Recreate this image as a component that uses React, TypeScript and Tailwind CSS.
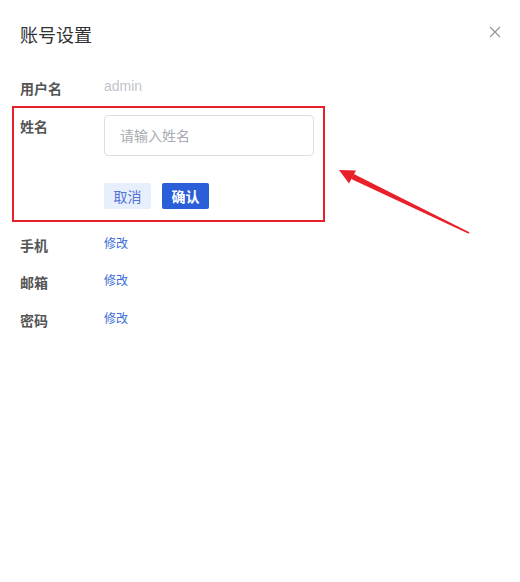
import React from "react";

const font = { fontFamily: '"Noto Sans CJK SC", "Noto Sans", sans-serif' };

export default function App() {
  return (
    <div className="relative w-[520px] h-[582px] bg-white overflow-hidden" style={font}>
      <div className="flex items-center justify-between pl-5 pr-[20px] pt-[22px] h-[46px]">
        <div className="text-[18px] leading-6 text-[#303133]">账号设置</div>
        <svg width="12" height="12" viewBox="0 0 12 12" className="mr-[-1px] mt-[-4px]">
          <path d="M1 1 L11 11 M11 1 L1 11" stroke="#909399" strokeWidth="1.1" />
        </svg>
      </div>

      <div className="flex flex-col px-5 pt-[31px]">
        <div className="flex items-center h-[22px]">
          <div className="w-[84px] text-[14px] font-semibold text-[#555]">用户名</div>
          <div className="text-[14px] text-[#c0c4cc] mt-[-4px]" style={{ fontFamily: '"Liberation Sans", sans-serif' }}>admin</div>
        </div>

        <div className="flex mt-4">
          <div className="w-[84px] text-[14px] leading-[22px] font-semibold text-[#555]">姓名</div>
          <div className="flex flex-col">
            <div className="w-[210px] h-[41px] border border-[#dcdfe6] rounded flex items-center pl-[15px] text-[14px] text-[#a8abb2]">
              请输入姓名
            </div>
            <div className="flex gap-[11px] mt-[27px]">
              <div className="w-[47px] h-[26px] rounded-[2px] bg-[#e8effc] text-[#4f74d6] text-[14px] flex items-center justify-center">取消</div>
              <div className="w-[47px] h-[26px] rounded-[2px] bg-[#2b5fd9] text-white text-[14px] font-semibold flex items-center justify-center">确认</div>
            </div>
          </div>
        </div>

        <div className="flex items-center h-[22px] mt-[25px]">
          <div className="w-[84px] text-[14px] font-semibold text-[#555]">手机</div>
          <div className="text-[12px] text-[#3a6bd8] mt-[-4px]">修改</div>
        </div>
        <div className="flex items-center h-[22px] mt-[15px]">
          <div className="w-[84px] text-[14px] font-semibold text-[#555]">邮箱</div>
          <div className="text-[12px] text-[#3a6bd8] mt-[-4px]">修改</div>
        </div>
        <div className="flex items-center h-[22px] mt-4">
          <div className="w-[84px] text-[14px] font-semibold text-[#555]">密码</div>
          <div className="text-[12px] text-[#3a6bd8] mt-[-4px]">修改</div>
        </div>
      </div>

      {/* annotation box */}
      <div className="absolute left-[12px] top-[106px] w-[313px] h-[116px] border-2 border-[#e8202a] pointer-events-none" />
      {/* annotation arrow */}
      <svg className="absolute left-0 top-0 pointer-events-none" width="520" height="582">
        <polygon points="339,170 356,170.5 349,183.5" fill="#e8202a" />
        <polygon points="353.8,174 351.2,179 468.7,233.8 469.4,232.2" fill="#e8202a" />
      </svg>
    </div>
  );
}
